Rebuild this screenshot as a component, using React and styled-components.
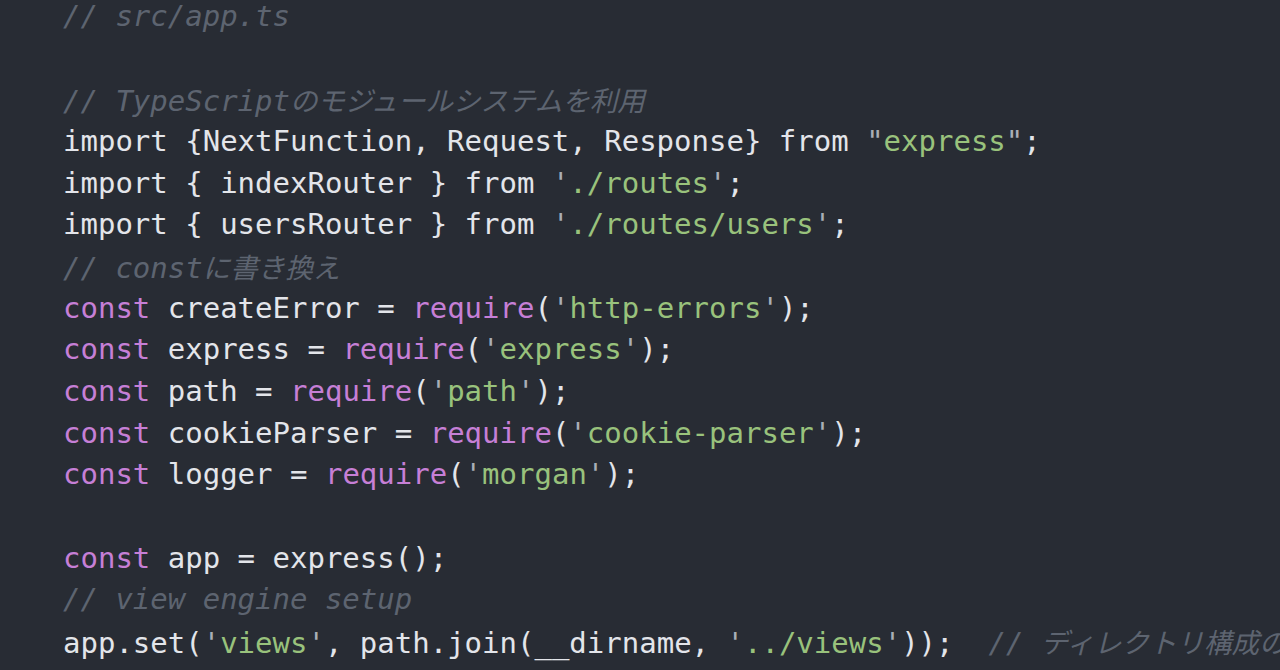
import React from "react";
import styled, { createGlobalStyle } from "styled-components";

const GlobalStyle = createGlobalStyle`
  html, body {
    margin: 0;
    padding: 0;
    background: #282c34;
    overflow: hidden;
  }
`;

const q = (t) => ["q", t];
const s = (t) => ["s", t];
const p = (t) => ["p", t];
const k = (t) => ["k", t];
const c = (t) => ["c", t];
const j = (t) => ["j", t];

const str = (t, mark = "'") => [q(mark), s(t), q(mark)];
const req = (name, mod) => [
  k("const"),
  p(` ${name} = `),
  k("require"),
  p("("),
  ...str(mod),
  p(");"),
];

const lines = [
  [c("// src/app.ts")],
  [],
  [c("// TypeScript"), j("のモジュールシステムを利用")],
  [p("import {NextFunction, Request, Response} from "), ...str("express", '"'), p(";")],
  [p("import { indexRouter } from "), ...str("./routes"), p(";")],
  [p("import { usersRouter } from "), ...str("./routes/users"), p(";")],
  [c("// const"), j("に書き換え")],
  req("createError", "http-errors"),
  req("express", "express"),
  req("path", "path"),
  req("cookieParser", "cookie-parser"),
  req("logger", "morgan"),
  [],
  [k("const"), p(" app = express();")],
  [c("// view engine setup")],
  [
    p("app.set("),
    ...str("views"),
    p(", path.join(__dirname, "),
    ...str("../views"),
    p("));  "),
    c("// "),
    j("ディレクトリ構成の変更"),
  ],
  [p("app.set("), ...str("view engine"), p(", "), ...str("ejs"), p(");")],
];

const App = () => {
  return (
    <Editor>
      <GlobalStyle />
      <Code>
        {lines.map((tokens, i) => (
          <Line key={i}>
            {tokens.map(([type, text], n) => (
              <Token key={n} $type={type}>
                {text}
              </Token>
            ))}
          </Line>
        ))}
      </Code>
    </Editor>
  );
};

export default App;

const colors = {
  p: "#e3e5ea",
  k: "#c67fd6",
  s: "#99c27c",
  q: "#a9aeb6",
  c: "#5d6470",
  j: "#5d6470",
};

const Editor = styled.div`
  width: 1280px;
  height: 670px;
  background: #282c34;
  overflow: hidden;
`;

const Code = styled.div`
  margin-top: -4px;
  padding-left: 63px;
  font-family: "DejaVu Sans Mono", "Noto Sans CJK JP", monospace;
  font-size: 29px;
`;

const Line = styled.div`
  height: 41.67px;
  line-height: 41.67px;
  white-space: pre;
`;

const Token = styled.span`
  color: ${({ $type }) => colors[$type]};
  font-style: ${({ $type }) => ($type === "c" || $type === "j" ? "italic" : "normal")};
  font-family: ${({ $type }) =>
    $type === "j" ? '"Noto Sans CJK JP", sans-serif' : "inherit"};
  font-size: ${({ $type }) => ($type === "j" ? "27.5px" : "inherit")};
`;
